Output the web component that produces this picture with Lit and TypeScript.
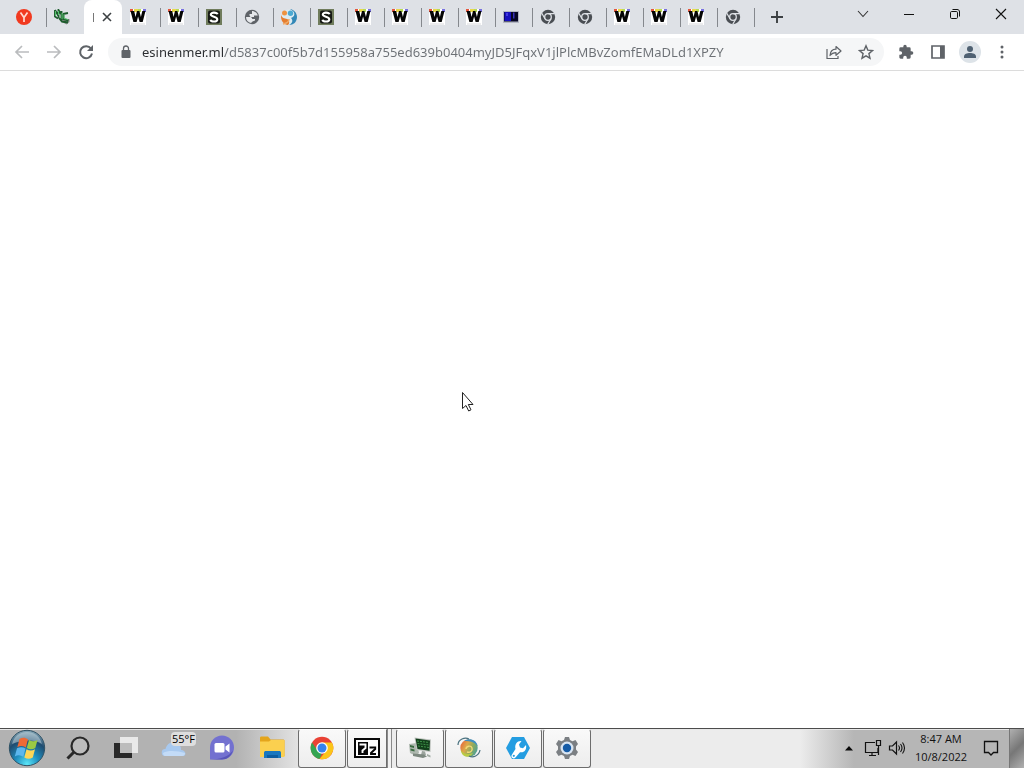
import { LitElement, html, svg, css, nothing } from "lit";
import { customElement, property } from "lit/decorators.js";
import { classMap } from "lit/directives/class-map.js";

const glyphs: Record<string, [string, unknown]> = {
  y: ["0 0 16 16", svg`<circle cx="8" cy="8" r="8" fill="#f1391f"/><path d="M4.500 3.500 8 8.500M11.500 3.500 8 8.500V13" fill="none" stroke="#ffd9d0" stroke-width="1.700"/>`],
  runes: ["0 0 16 16", svg`<path d="M8 10h7.500v3l-3 2.500L8 13z" fill="#8d928f"/><path d="M1 1v6.500l3 2M1 1l3.500 6V1L7 5M7.500 2v9M9 5l5-1M9.500 5v5l5 1.500M5 9l3 3.500 6 1" fill="none" stroke="#1d5c2d" stroke-width="1.900"/><path d="M1.500 2v5M4.500 2v4M8 4v6M10 5.500v4l4 1" fill="none" stroke="#62d87c" stroke-width=".8"/>`],
  w: ["0 0 16 16", svg`<path d="M0 0h16v16H0z" fill="#fff"/><path d="M0 0h3v3H0z" fill="#e4553d"/><path d="M4 0h4v3H4z" fill="#ead84b"/><path d="M8 0h3v3H8z" fill="#b9dc55"/><path d="M13 0h3v3h-3z" fill="#7771e0"/><path d="M.5 2h3.700l1.300 6L7 2h2.400l1.500 6L12.300 2h3.200l-2.800 11H9.600L8.100 7.500 6.600 13H3.400z" fill="#050505"/><path d="M1 15h14" stroke="#d9d9dc"/>`],
  s: ["0 0 16 16", svg`<path d="M0 0h16v16H0z" fill="#707c5c"/><rect x="2" y="1.500" width="12" height="13" rx="2" fill="#161914"/><path d="M11.500 5.300C11 3.200 4.800 2.800 4.800 5.600 4.800 8.300 11.300 7.400 11.300 10.400 11.300 13.200 5 13 4.500 10.700" fill="none" stroke="#fff" stroke-width="2.100"/>`],
  globe: ["0 0 16 16", svg`<circle cx="8" cy="8" r="7.200" fill="#5f6368"/><path d="M2 8h4.500c1 0 1.700 1 1.700 2H11v1.500L8.500 12.500 7 14C4 13.500 2 11 2 8z" fill="#e6e8eb"/><path d="M8 2c2.500 0 5 1.700 5.800 4.500H10V8H6.500L5.500 6.500V5H8z" fill="#e6e8eb"/>`],
  swirl: ["0 0 16 16", svg`<circle cx="8" cy="8" r="7.500" fill="#dcebf1"/><path d="M9 0c4 .5 7 4 7 8 0 5-3.500 8-8 8C12 14 12 11 10 9c3-1 4-3.500 3-5.500C12 1.700 10.500 1 9 0z" fill="#3388b7"/><path d="M0 6c1 3 3.500 3.500 6 4 2.500 1 3 4 1 6C2.500 15.700-.5 11 0 6z" fill="#e57d2f"/><circle cx="3.500" cy="4" r="2.500" fill="#ee9340"/><circle cx="9.500" cy="4.300" r="2.700" fill="#4ba9d2"/><path d="M2 15c5-1 6-3 6-5" fill="none" stroke="#efaa67" stroke-width="1.500"/>`],
  screen: ["0 0 16 16", svg`<path d="M0 2h16v12H0z" fill="#b4b7c3"/><path d="M1 3h14v9.500H1z" fill="#070724"/><path d="M1.500 3h6.500v9H1.500z" fill="#1710bd"/><path d="M10 3.500h1.500v6H10z" fill="#3a32b8"/><path d="M3 4h2v3H3z" fill="#443be0"/>`],
  mono: ["0 0 16 16", svg`<circle cx="8" cy="8" r="7.200" fill="#4a4e53"/><circle cx="8" cy="8" r="3.300" fill="#4a4e53" stroke="#dee1e6" stroke-width="1.300"/><path d="M8 4.600h6.600M5 9.700 1.800 4.200M11 9.700l-3.300 5.700" stroke="#dee1e6" stroke-width="1.200"/>`],
  x: ["0 0 16 16", svg`<path d="m4 4 8 8M12 4l-8 8" stroke="#3c4043" stroke-width="1.600"/>`],
  plus: ["0 0 16 16", svg`<path d="M8 2v12M2 8h12" stroke="#3c4043" stroke-width="1.900"/>`],
  down: ["0 0 16 16", svg`<path d="m3 4 5 5.500L13 4" fill="none" stroke="#333" stroke-width="1.100"/>`],
  min: ["0 0 16 16", svg`<path d="M3 7.500h10" stroke="#111"/>`],
  restore: ["0 0 16 16", svg`<rect x="3.500" y="4.500" width="7" height="7" rx="1.200" fill="none" stroke="#111"/><path d="M5.500 2.500H10c1.700 0 2.500.8 2.500 2.500v4.500" fill="none" stroke="#111"/>`],
  close: ["0 0 16 16", svg`<path d="m3 2 10 10M13 2 3 12" stroke="#111" stroke-width="1.100"/>`],
  back: ["0 0 16 16", svg`<path d="M15 8H2M8 2 2 8l6 6" fill="none" stroke="#babcbe" stroke-width="1.700"/>`],
  forward: ["0 0 16 16", svg`<path d="M1 8h13M8 2l6 6-6 6" fill="none" stroke="#babcbe" stroke-width="1.700"/>`],
  reload: ["0 0 16 16", svg`<path d="M13 4.600A6 6 0 1 0 14 9.500" fill="none" stroke="#5f6368" stroke-width="2"/><path d="M15 1v6H9z" fill="#5f6368"/>`],
  lock: ["0 0 16 16", svg`<rect x="3.500" y="6" width="9" height="8" rx="1" fill="#5f6368"/><path d="M5.500 6.500V4.500a2.500 2.500 0 0 1 5 0v2" fill="none" stroke="#5f6368" stroke-width="1.300"/>`],
  share: ["0 0 16 16", svg`<path d="M1 5v9.500h11V12" fill="none" stroke="#5f6368" stroke-width="1.200"/><path d="M4 11.500C4.300 7.500 6.500 5.200 10 5.200V2.500L15 7l-5 4.300V8.700c-2.500 0-4.400.8-6 2.800z" fill="none" stroke="#5f6368" stroke-width="1.200" stroke-linejoin="round"/>`],
  star: ["0 0 16 16", svg`<path d="m8 1.800 1.800 4.300 4.700.4-3.600 3.100 1.100 4.600L8 11.800l-4 2.400 1.100-4.600-3.600-3.100 4.700-.4z" fill="none" stroke="#5f6368" stroke-width="1.400"/>`],
  puzzle: ["0 0 24 24", svg`<path d="M20.500 11H19V7a2 2 0 0 0-2-2h-4V3.500a2.500 2.500 0 0 0-5 0V5H4a2 2 0 0 0-2 2v3.800h1.500a2.700 2.700 0 0 1 0 5.400H2V20c0 1.100.9 2 2 2h3.800v-1.500a2.700 2.700 0 0 1 5.400 0V22H17a2 2 0 0 0 2-2v-4h1.500a2.500 2.500 0 0 0 0-5z" fill="#5f6368"/>`],
  panel: ["0 0 16 16", svg`<path d="M2 2h12v12H2z" fill="none" stroke="#5f6368" stroke-width="1.700"/><path d="M10 2h4v12h-4z" fill="#5f6368"/>`],
  avatar: ["0 0 22 22", svg`<circle cx="11" cy="11" r="11" fill="#dde3e8"/><circle cx="11" cy="8" r="3" fill="#4f6172"/><path d="M5 17v-1.500c0-2.500 3-3.500 6-3.500s6 1 6 3.500V17z" fill="#4f6172"/>`],
  dots: ["0 0 16 16", svg`<circle cx="8" cy="3" r="1.500" fill="#5f6368"/><circle cx="8" cy="8" r="1.500" fill="#5f6368"/><circle cx="8" cy="13" r="1.500" fill="#5f6368"/>`],
  start: ["0 0 38 38", svg`<defs><radialGradient id="orb" cx=".5" cy=".95" r=".95"><stop offset="0" stop-color="#5be6f7"/><stop offset=".35" stop-color="#1f8fc0"/><stop offset=".7" stop-color="#1f4c70"/><stop offset="1" stop-color="#8aabba"/></radialGradient></defs><circle cx="19" cy="19" r="17.700" fill="url(#orb)" stroke="#2f5265"/><path d="M4 15C6 7 12 3 19 3s13 4 15 12c-9-5-20-4-30 0z" fill="#dbe8ec" opacity=".45"/><path d="M11.500 10c3-2 6-1.500 8.500.3l-2.200 8.200c-2.700-1.800-5.500-2-8.500-.3z" fill="#ee6a35"/><path d="M21 11c3 1.800 5.500 1.800 8.500-.1l-2.200 8.200c-2.900 1.700-5.800 1.700-8.500-.1z" fill="#9bc944"/><path d="M9 19.300c3-1.600 5.800-1.500 8.500.3l-2.200 8.200c-2.700-1.900-5.500-2-8.500-.4z" fill="#5cb7ee"/><path d="M18.500 20.200c2.800 1.700 5.500 1.700 8.500.1l-2.200 8.200c-3 1.700-5.600 1.600-8.500-.1z" fill="#fdd658"/>`],
  search: ["0 0 24 24", svg`<circle cx="14" cy="10" r="8.500" fill="#bdbdbd" stroke="#292929" stroke-width="2.200"/><path d="m8 16-6.500 6.500" stroke="#292929" stroke-width="3"/>`],
  taskview: ["0 0 24 24", svg`<path d="M0 7h18v15H0z" fill="#292929"/><path d="M6 1h18v16H6z" fill="#f2f2f2" opacity=".85"/><path d="M6 7h12v10H6z" fill="#bcbcbc"/>`],
  cloud: ["0 0 26 18", svg`<path d="M4 17a3.500 3.500 0 0 1 .5-7C6 4 12 1 17 5c3 2 3 4 3 6 5 0 6 6 2 6z" fill="#a8c9ef"/><path d="M2 14c5-3 15-2 22 0 0 2-1 3-3 3H4c-1 0-2-1-2-3z" fill="#c3dbf7"/>`],
  chat: ["0 0 26 26", svg`<path d="M1 24.500V12.500A12 12 0 1 1 13 24.500z" fill="#7371d0"/><path d="M1 24.500c10 0 19-3 23-9-2 6-6 9-11 9z" fill="#5855b8"/><rect x="5.500" y="8" width="10" height="9.500" rx="1.500" fill="#fff"/><path d="m16.500 11.500 4-3v9l-4-3z" fill="#fff"/>`],
  folder: ["0 0 26 24", svg`<path d="M1 2c0-1 .5-1.500 1.500-1.500H9l2.500 3H24c1 0 1.500.5 1.500 1.500v15H1z" fill="#e4a51c"/><path d="M1 5.500h9L12 4h13.500v17H1z" fill="#fbd04f"/><path d="M5 22v-5c0-1.400.6-2 2-2h13c1.400 0 2 .6 2 2v5z" fill="#1977bf"/><path d="M8 19h11v3H8z" fill="#0d5da0"/>`],
  chrome: ["0 0 24 24", svg`<circle cx="12" cy="12" r="11.300" fill="#e94235"/><path d="M2 6.500 7.500 14.500 12 17l-2.500 6A11.300 11.300 0 0 1 2 6.500z" fill="#34a552"/><path d="M12 6.500h9.900A11.300 11.300 0 0 1 9.500 23L16.500 14.500z" fill="#fbc519"/><circle cx="12" cy="12" r="5.800" fill="#fff"/><circle cx="12" cy="12" r="4.500" fill="#3582ee"/>`],
  seven: ["0 0 26 20", svg`<path d="M1 1h24v18H1z" fill="#fff" stroke="#080808" stroke-width="2"/><path d="M4 4h10v13H4z" fill="#080808"/><path d="M5.500 6.500h6v3.500l-3 2.500V15" fill="none" stroke="#fff" stroke-width="1.900"/><path d="M15.500 9.500h5.700v1.500L17 15v1h5" fill="none" stroke="#080808" stroke-width="1.900"/>`],
  computer: ["0 0 24 24", svg`<path d="m1 8 8-1 2 10-3 3-6-3z" fill="#aeb8af"/><path d="m2 9 4 1v2l-4-1zM2.500 12.500l4 1v2l-4-1z" fill="#3a6a40"/><path d="m6.500 1.500 16.500 2-.5 12.500-14-2z" fill="#c0c5c0"/><path d="m7.500 2.500 14.500 2-.5 10.200-12-1.700z" fill="#123f1b"/><path d="m9 5 12 1.500M9.500 7.500 21 9M10 10l11 1.500" stroke="#409349" stroke-dasharray="2 1"/><path d="m14 15 3 .5 1 3.500h-5z" fill="#9ba49d"/><path d="m5 17.500 11 1 3 2-4 1.500-10-2z" fill="#7c887f"/><path d="m19 18 3.500 1.500v2L19 20z" fill="#a3ada5"/>`],
  orb: ["0 0 24 24", svg`<defs><linearGradient id="ball" x1="0" y1=".2" x2="1" y2=".7"><stop offset="0" stop-color="#e6643a"/><stop offset=".35" stop-color="#dda94a"/><stop offset=".65" stop-color="#8cab5d"/><stop offset="1" stop-color="#4a9f9a"/></linearGradient></defs><circle cx="12" cy="12" r="8.700" fill="url(#ball)"/><path d="M7 5c5-4 13-1 13.500 5-3-4-7-5-13.500-5z" fill="#3f8fc4"/><path d="M4 14c2 4 7 5 12 3-2 4-7 4.500-10 2-1.300-1.200-2-3-2-5z" fill="#b8ca45"/><path d="M9 13c0-3 5-4 6-1s-2 5-5 4" fill="none" stroke="#f3d878" stroke-width="1.400"/><path d="M1 9C1 3 8 1 12 3M23 14c-1 6-7 8-11 6" fill="none" stroke="#49717f" stroke-width="1.200"/>`],
  wrench: ["0 0 24 24", svg`<path d="M6 1h12l6 11-6 11H6L0 12z" fill="#249de1"/><path d="M15.500 5 13 8.500l1 3 3 .7 3-3.200c1 5-2 8-6 7.200L9.500 21.500c-2 2.500-5.500-.5-3.500-3L9.500 13C8.300 8 11.500 4.500 15.500 5z" fill="#fff"/><circle cx="7.800" cy="19.800" r="1.100" fill="#249de1"/>`],
  gear: ["0 0 24 24", svg`<path d="M10 1h4l1 3 2.500 1.200L20.500 4l2.500 4-2 2.500v3L23 16l-2.500 4-3-1.200L15 20l-1 3h-4l-1-3-2.500-1.200L3.500 20 1 16l2-2.500v-3L1 8l2.500-4 3 1.200L9 4z" fill="#7b7f83"/><circle cx="12" cy="12" r="6.500" fill="#d9e5f2"/><circle cx="12" cy="12" r="4.200" fill="#165ca7"/>`],
  up: ["0 0 16 16", svg`<path d="m4 10.500 4-4.500 4 4.500z" fill="#080808"/>`],
  network: ["0 0 18 18", svg`<path d="M11 3.500H1.500v10H14V9M5 16.500h7M8 13.500v3" fill="none" stroke="#111" stroke-width="1.200"/><path d="M12.500 1.500h4v5h-4zM14.500 6.500V16" fill="none" stroke="#111" stroke-width="1.200"/>`],
  sound: ["0 0 18 18", svg`<path d="M1.500 7h3l4-4v12l-4-4h-3z" fill="none" stroke="#111" stroke-width="1.200"/><path d="M10.500 6.500q2 2.500 0 5M12.500 5q3 4 0 8M14.500 3.500q4 5.500 0 11" fill="none" stroke="#111" stroke-width="1.100"/>`],
  note: ["0 0 18 18", svg`<path d="M2.500 2.500h13v11h-4L9 16l-2.500-2.500h-4z" fill="none" stroke="#111" stroke-width="1.300"/>`],
  pointer: ["0 0 14 22", svg`<path d="M1.500 1.500v16l3.500-3 2.700 5.500 2.300-1.200-2.700-5.300H12z" fill="#fff" stroke="#222"/>`],
};

@customElement("ui-icon")
class UiIcon extends LitElement {
  static styles = css`
    :host { display: block; flex: none; width: 16px; height: 16px; }
    .glyph { display: block; width: 100%; height: 100%; }
  `;
  @property() name = "x";
  render() {
    const [box, shape] = glyphs[this.name];
    return html`<svg class="glyph" viewBox=${box} aria-hidden="true">${shape}</svg>`;
  }
}

const tabs = ["y", "runes", "active", "w", "w", "s", "globe", "swirl", "s", "w", "w", "w", "w", "screen", "mono", "mono", "w", "w", "w", "mono"];

@customElement("tab-strip")
class TabStrip extends LitElement {
  static styles = css`
    :host { display: flex; height: 34px; padding-left: 8px; background: #dee1e6; flex: none; }
    button { border: 0; padding: 0; background: none; }
    .tab { box-sizing: border-box; width: 37px; height: 34px; padding: 0 8px; display: flex; align-items: center; position: relative; }
    .wide { width: 38px; }
    .tab::after { content: ""; position: absolute; right: -1px; top: 8px; width: 1px; height: 19px; background: #85888d; }
    .plain::after { display: none; }
    .active { background: #fff; border-radius: 8px 8px 0 0; gap: 5px; padding: 0 7px 0 9px; }
    .active::after { display: none; }
    .sliver { width: 1px; height: 9px; background: #777; flex: none; }
    .new { width: 28px; margin-left: 9px; display: grid; place-items: center; }
    .spacer { flex: 1; }
    .window { width: 46px; height: 30px; display: grid; place-items: center; }
  `;
  render() {
    return html`
      ${tabs.map((t, i) => html`
        <button aria-label="Tab" class=${classMap({ tab: true, wide: i < 6, active: t === "active", plain: i === 1 })}>
          ${t === "active" ? html`<span class="sliver"></span><ui-icon name="x"></ui-icon>` : html`<ui-icon name=${t}></ui-icon>`}
        </button>`)}
      <button class="new" aria-label="New tab"><ui-icon name="plus"></ui-icon></button>
      <span class="spacer"></span>
      ${[["down", "Search tabs"], ["min", "Minimize"], ["restore", "Restore"], ["close", "Close"]].map(
        ([n, l]) => html`<button class="window" aria-label=${l}><ui-icon name=${n}></ui-icon></button>`)}
    `;
  }
}

@customElement("tool-bar")
class ToolBar extends LitElement {
  static styles = css`
    :host { display: flex; align-items: center; flex: none; height: 36px; padding: 0 6px; background: #fff; border-bottom: 1px solid #dcdcdc; }
    button { width: 32px; height: 28px; border: 0; padding: 0; background: none; display: grid; place-items: center; flex: none; }
    .omnibox { flex: 1; min-width: 0; display: flex; align-items: center; height: 28px; margin: 0 6px; padding: 0 2px 0 10px; gap: 8px; border-radius: 14px; background: #f5f6f7; box-sizing: border-box; }
    .url { flex: 1; min-width: 0; height: 20px; border: 0; padding: 0; outline: 0; font: 13px/20px "Noto Sans", "Open Sans", sans-serif; color: transparent; background: linear-gradient(90deg, #2b2d30 81px, #6c7075 81px); background-clip: text; -webkit-background-clip: text; }
    .actions { display: flex; }
    .avatar { width: 22px; height: 22px; }
  `;
  private tool(name: string, label: string) {
    return html`<button aria-label=${label}><ui-icon class=${name} name=${name}></ui-icon></button>`;
  }
  render() {
    return html`
      ${this.tool("back", "Back")}${this.tool("forward", "Forward")}${this.tool("reload", "Reload")}
      <div class="omnibox">
        <ui-icon name="lock"></ui-icon>
        <input class="url" aria-label="Address" spellcheck="false" value="esinenmer.ml/d5837c00f5b7d155958a755ed639b0404myJD5JFqxV1jlPlcMBvZomfEMaDLd1XPZY">
        <div class="actions">${this.tool("share", "Share")}${this.tool("star", "Bookmark")}</div>
      </div>
      ${this.tool("puzzle", "Extensions")}${this.tool("panel", "Side panel")}${this.tool("avatar", "Profile")}${this.tool("dots", "Menu")}
    `;
  }
}

@customElement("task-bar")
class TaskBar extends LitElement {
  static styles = css`
    :host { display: flex; flex: none; box-sizing: border-box; height: 40px; border-top: 1px solid #4c4c4c; font: 11px/18px "Open Sans", "Noto Sans", sans-serif; color: #111;
      background: linear-gradient(90deg, #b2b2b2 236px, #ececec 310px, #ececec calc(100% - 224px), #b6b6b6 calc(100% - 170px)); box-shadow: inset 0 1px #e8e8e8; }
    button { border: 0; padding: 0 0 2px; background: none; font: inherit; color: inherit; display: grid; place-items: center; flex: none; box-sizing: border-box; width: 48px; position: relative; }
    .start { width: 54px; }
    .folder { width: 52px; }
    .app { border: 1px solid #6d6d6d; border-top-color: #fff; border-radius: 3px; background: linear-gradient(#f9f9f9, #ededed); margin-right: 1px; }
    .seven { width: 40px; margin-right: 0; border-radius: 3px 0 0 3px; }
    .stack { width: 5px; margin-right: 4px; border: solid #8a8a8a; border-width: 0 1px; background: #f1f1f1; box-sizing: border-box; }
    ui-icon { width: 24px; height: 24px; }
    .start ui-icon { width: 38px; height: 38px; }
    .cloud ui-icon { width: 26px; height: 18px; }
    .chat ui-icon, .folder ui-icon { width: 26px; height: 26px; }
    .seven ui-icon { width: 26px; height: 20px; }
    .temp { position: absolute; right: 2px; top: 3px; padding: 0 1px; font-size: 11px; line-height: 14px; border-radius: 4px; background: #dedede; color: #000; }
    .spacer { flex: 1; }
    .tray { width: 24px; }
    .tray ui-icon, .note ui-icon { width: 18px; height: 18px; }
    .up ui-icon { width: 16px; height: 16px; }
    .clock { width: 64px; align-content: center; }
    .note { width: 36px; }
    .desktop { width: 15px; border-left: 1px solid #777; background: linear-gradient(135deg, #b0b0b0, #777 50%, #b0b0b0); }
  `;
  private item(name: string, label: string, kind = "", extra: unknown = nothing) {
    return html`<button class="${kind} ${name}" aria-label=${label}><ui-icon name=${name}></ui-icon>${extra}</button>`;
  }
  render() {
    return html`
      ${this.item("start", "Start")}${this.item("search", "Search")}${this.item("taskview", "Task view")}
      ${this.item("cloud", "Weather", "", html`<span class="temp">55°F</span>`)}
      ${this.item("chat", "Chat")}${this.item("folder", "File Explorer")}
      ${this.item("chrome", "Chrome", "app")}${this.item("seven", "Archiver", "app")}<span class="stack"></span>
      ${this.item("computer", "Computer", "app")}${this.item("orb", "Viewer", "app")}${this.item("wrench", "Tools", "app")}${this.item("gear", "Settings", "app")}
      <span class="spacer"></span>
      ${this.item("up", "Hidden icons", "tray")}${this.item("network", "Network", "tray")}${this.item("sound", "Volume", "tray")}
      <button class="clock"><span>8:47 AM</span><span>10/8/2022</span></button>
      ${this.item("note", "Notifications")}
      <button class="desktop" aria-label="Show desktop"></button>
    `;
  }
}

@customElement("app-root")
class AppRoot extends LitElement {
  static styles = css`
    :host { display: flex; flex-direction: column; height: 100vh; background: #fff; }
    .page { flex: 1; position: relative; }
    .pointer { position: absolute; left: 461px; top: 320px; width: 14px; height: 22px; }
  `;
  render() {
    return html`
      <tab-strip></tab-strip>
      <tool-bar></tool-bar>
      <main class="page"><ui-icon class="pointer" name="pointer"></ui-icon></main>
      <task-bar></task-bar>
    `;
  }
}
